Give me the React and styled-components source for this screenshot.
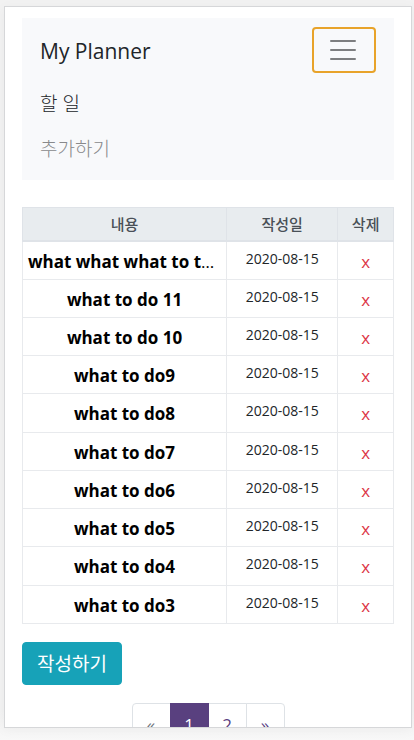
import React from "react";
import styled, { createGlobalStyle } from "styled-components";

const GlobalStyle = createGlobalStyle`
  *, *::before, *::after { box-sizing: border-box; }
  body {
    margin: 0;
    background: #f2f2f2;
    color: #212529;
    font-family: "Open Sans", "Noto Sans CJK KR", sans-serif;
    font-size: 17px;
    line-height: 26px;
  }
`;

const Page = styled.div`
  height: 100vh;
  padding: 6px 2px 12px 4px;
  background: linear-gradient(to bottom, #f2f2f2 96%, #f8f8f8);
`;

const Frame = styled.main`
  height: 100%;
  padding: 11px 17px 0;
  overflow: hidden;
  background: #fff;
  border: 1px solid #d6d7d9;
  box-shadow: 0 2px 12px rgba(0, 0, 0, 0.04);
`;

const Navbar = styled.nav`
  padding: 9px 18px 8px;
  background: #f8f9fb;
`;

const NavTop = styled.div`
  display: flex;
  align-items: center;
  justify-content: space-between;
  height: 46px;
`;

const Brand = styled.a`
  padding-top: 2px;
  color: #212529;
  font-size: 21px;
  text-decoration: none;
`;

const Toggler = styled.button`
  display: flex;
  align-items: center;
  justify-content: center;
  width: 64px;
  height: 46px;
  padding: 0 2px 0 0;
  background: transparent;
  border: 2px solid #e8a32a;
  border-radius: 4px;
`;

const NavList = styled.ul`
  margin: 0;
  padding: 9px 0 0;
  list-style: none;
`;

const NavLink = styled.a`
  display: block;
  padding: 9px 0 10px;
  color: ${(p) => (p.$active ? "#212529" : "#88898b")};
  font-size: 19px;
  font-weight: 300;
  text-decoration: none;
`;

const Table = styled.table`
  width: 100%;
  height: 417px;
  margin-top: 27px;
  border-collapse: collapse;
  table-layout: fixed;
  text-align: center;
`;

const Col = styled.col`
  width: ${(p) => p.$width};
`;

const HeadCell = styled.th`
  height: 33px;
  padding: 0;
  background: #e8ecef;
  border: 1px solid #dfe3e8;
  border-bottom-width: 2px;
  color: #495057;
  font-size: 15px;
  font-weight: 500;
  line-height: 24px;
`;

const Cell = styled.td`
  padding: ${(p) => (p.$date ? "5px" : "7px 5px 4px")};
  border: 1px solid #e8eaed;
  color: ${(p) => (p.$date ? "#212529" : "#000")};
  font-size: ${(p) => (p.$date ? "14px" : "17px")};
  line-height: ${(p) => (p.$date ? "24px" : "26px")};
  vertical-align: top;
  white-space: nowrap;
  overflow: hidden;
  text-overflow: ellipsis;
`;

const TaskLink = styled.a`
  color: #000;
  font-weight: 700;
  text-decoration: none;
`;

const DeleteButton = styled.button`
  padding: 0;
  background: none;
  border: 0;
  color: #dc3545;
  font: inherit;
`;

const WriteButton = styled.button`
  display: block;
  height: 43px;
  margin: 18px 0;
  padding: 0 14px;
  background: #17a2b8;
  border: 1px solid #17a2b8;
  border-radius: 4px;
  color: #fff;
  font: inherit;
  font-size: 19px;
`;

const Pagination = styled.ul`
  display: flex;
  justify-content: center;
  margin: 0;
  padding: 0;
  list-style: none;
`;

const PageItem = styled.li`
  & + & { margin-left: -1px; }
  &:first-child a { border-radius: 4px 0 0 4px; }
  &:last-child a { border-radius: 0 4px 4px 0; }
`;

const PageLink = styled.a`
  display: block;
  position: relative;
  z-index: ${(p) => (p.$active ? 1 : 0)};
  min-width: 39px;
  padding: 8px 12px;
  background: ${(p) => (p.$active ? "#59407f" : "#fff")};
  border: 1px solid ${(p) => (p.$active ? "#59407f" : "#dee2e6")};
  color: ${(p) => (p.$active ? "#fff" : p.$disabled ? "#6c757d" : "#59407f")};
  text-align: center;
  text-decoration: none;
`;

const tasks = [
  "what what what to to do",
  "what to do 11",
  "what to do 10",
  "what to do9",
  "what to do8",
  "what to do7",
  "what to do6",
  "what to do5",
  "what to do4",
  "what to do3",
];

function MenuIcon() {
  return (
    <svg width="28" height="24" viewBox="0 0 28 24" fill="none" stroke="#7d7e80" strokeWidth="2" strokeLinecap="round" aria-hidden="true">
      <path d="M2 3H26M2 12H26M2 21H26" />
    </svg>
  );
}

export default function App() {
  return (
    <Page>
      <GlobalStyle />
      <Frame>
        <Navbar>
          <NavTop>
            <Brand href="#">My Planner</Brand>
            <Toggler type="button" aria-label="Toggle navigation" aria-expanded="true">
              <MenuIcon />
            </Toggler>
          </NavTop>
          <NavList>
            <li><NavLink href="#list" $active>할 일</NavLink></li>
            <li><NavLink href="#add">추가하기</NavLink></li>
          </NavList>
        </Navbar>
        <Table>
          <colgroup>
            <Col $width="55%" />
            <Col $width="30%" />
            <Col $width="15%" />
          </colgroup>
          <thead>
            <tr>
              <HeadCell scope="col">내용</HeadCell>
              <HeadCell scope="col">작성일</HeadCell>
              <HeadCell scope="col">삭제</HeadCell>
            </tr>
          </thead>
          <tbody>
            {tasks.map((task) => (
              <tr key={task}>
                <Cell><TaskLink href="#task">{task}</TaskLink></Cell>
                <Cell $date>2020-08-15</Cell>
                <Cell><DeleteButton type="button" aria-label={`x ${task}`}>x</DeleteButton></Cell>
              </tr>
            ))}
          </tbody>
        </Table>
        <WriteButton type="button">작성하기</WriteButton>
        <Pagination>
          <PageItem><PageLink href="#prev" $disabled>«</PageLink></PageItem>
          <PageItem><PageLink href="#1" $active aria-current="page">1</PageLink></PageItem>
          <PageItem><PageLink href="#2">2</PageLink></PageItem>
          <PageItem><PageLink href="#next">»</PageLink></PageItem>
        </Pagination>
      </Frame>
    </Page>
  );
}
